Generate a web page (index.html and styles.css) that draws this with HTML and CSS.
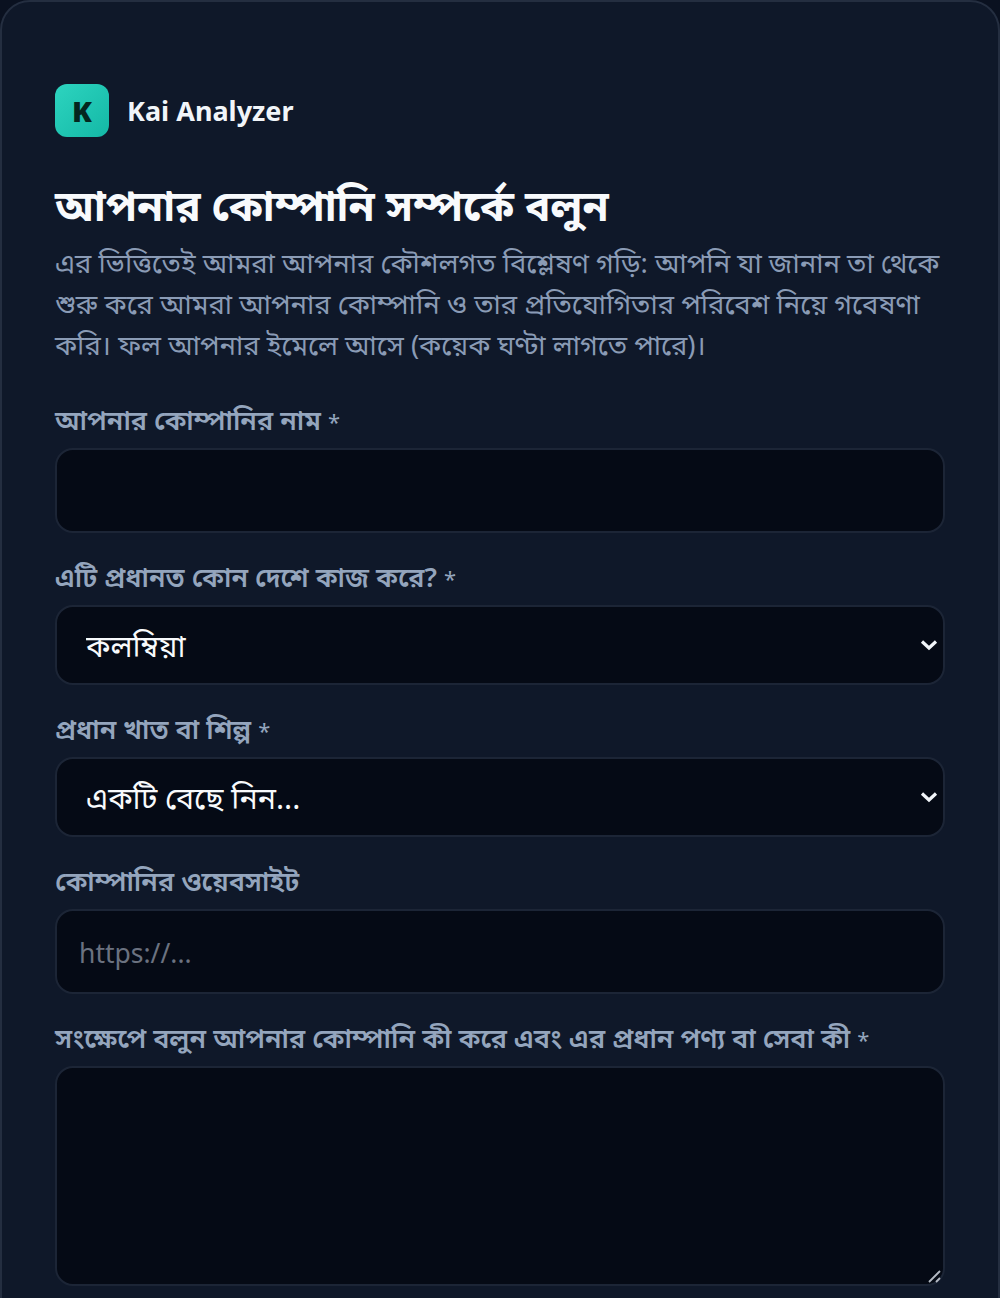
FILE: index.html
```html
<!DOCTYPE html>
<html lang="bn">
<head>
<meta charset="utf-8">
<title>Kai Analyzer</title>
<link rel="stylesheet" href="styles.css">
</head>
<body>
<main class="card">
  <div class="brand">
    <div class="logo">K</div>
    <span class="brand-name">Kai Analyzer</span>
  </div>
  <h1 class="title">আপনার কোম্পানি সম্পর্কে বলুন</h1>
  <p class="lead">এর ভিত্তিতেই আমরা আপনার কৌশলগত বিশ্লেষণ গড়ি: আপনি যা জানান তা থেকে শুরু করে আমরা আপনার কোম্পানি ও তার প্রতিযোগিতার পরিবেশ নিয়ে গবেষণা করি। ফল আপনার ইমেলে আসে (কয়েক ঘণ্টা লাগতে পারে)।</p>
  <form class="form">
    <label class="field"><span class="label">আপনার কোম্পানির নাম <span class="req">*</span></span><input class="control input" type="text"></label>
    <label class="field"><span class="label">এটি প্রধানত কোন দেশে কাজ করে? <span class="req">*</span></span>
      <span class="select-wrap"><select class="control select"><option>কলম্বিয়া</option></select>
      <svg class="chevron" viewBox="0 0 18 12" aria-hidden="true"><path d="M2 2.5 L9 9 L16 2.5"/></svg></span></label>
    <label class="field"><span class="label">প্রধান খাত বা শিল্প <span class="req">*</span></span>
      <span class="select-wrap"><select class="control select"><option>একটি বেছে নিন...</option></select>
      <svg class="chevron" viewBox="0 0 18 12" aria-hidden="true"><path d="M2 2.5 L9 9 L16 2.5"/></svg></span></label>
    <label class="field"><span class="label">কোম্পানির ওয়েবসাইট</span><input class="control input" type="text" placeholder="https://..."></label>
    <label class="field"><span class="label">সংক্ষেপে বলুন আপনার কোম্পানি কী করে এবং এর প্রধান পণ্য বা সেবা কী <span class="req">*</span></span>
      <span class="area-wrap"><textarea class="control area"></textarea>
      <svg class="grip" viewBox="0 0 13 13" aria-hidden="true"><path d="M1 12 L12 1 M8 12 L12 8"/></svg></span></label>
  </form>
</main>
</body>
</html>
```
FILE: styles.css
```css
* { box-sizing: border-box; }
html, body { margin: 0; padding: 0; background: #0a1120; }
body { height: 1298px; overflow: hidden; font-family: "Noto Sans", "Noto Sans Bengali", "Liberation Sans", sans-serif; }
.card {
  width: 1000px; height: 1400px;
  padding: 82px 53px 0 53px;
  background: #0f1829;
  border: 2px solid #242e40;
  border-radius: 30px;
}
.brand { display: flex; align-items: center; gap: 18px; }
.logo {
  width: 54px; height: 53px; border-radius: 12px;
  background: linear-gradient(135deg, #2dd4bf, #14b8a6);
  color: #04261f; font: 900 29px "Noto Sans", sans-serif;
  display: flex; align-items: center; justify-content: center;
}
.brand-name { color: #f1f5f9; font: 700 27px "Noto Sans", sans-serif; }
.title { margin: 38px 0 0; color: #f8fafc; font-size: 42.2px; font-weight: 700; line-height: 60px; }
.lead { margin: 7px 0 0; color: #8a9bb5; font-size: 27.4px; line-height: 41px; }
.form { margin-top: 37px; display: flex; flex-direction: column; gap: 26px; }
.field { display: flex; flex-direction: column; gap: 9px; }
.label { display: block; height: 37px; color: #94a5bd; font-size: 27px; font-weight: 600; line-height: 36px; }
.req { font-size: 22px; font-weight: 400; }
.control {
  display: block; width: 100%; background: #050a15; color: #f8fafc;
  border: 2px solid #1c2536; border-radius: 18px;
  font: 30.3px "Noto Sans", "Noto Sans Bengali", sans-serif; padding: 0 22px;
  outline: none;
}
.input { height: 85px; }
.input::placeholder { color: #6b7280; font-size: 26.5px; }
.select-wrap, .area-wrap { position: relative; display: block; }
.select { height: 80px; appearance: none; padding-left: 29px; }
.chevron {
  position: absolute; right: 7px; top: 50%;
  width: 18px; height: 12px; margin-top: -6px;
  fill: none; stroke: #f1f5f9; stroke-width: 3.2; pointer-events: none;
}
.area { height: 220px; resize: none; }
.grip {
  position: absolute; right: 4px; bottom: 3px;
  width: 13px; height: 13px;
  fill: none; stroke: #b4bac4; stroke-width: 1.8; pointer-events: none;
}
```
